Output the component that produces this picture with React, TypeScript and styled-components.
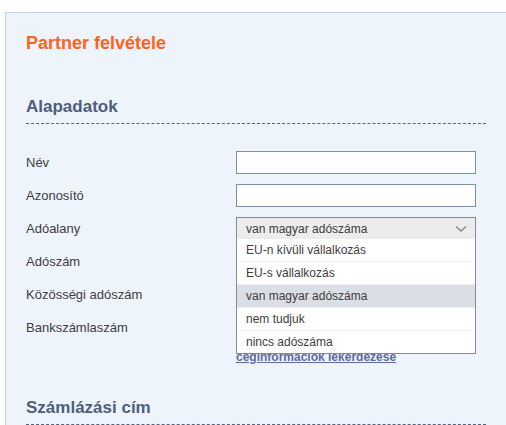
import styled, { createGlobalStyle } from "styled-components";

const GlobalStyle = createGlobalStyle`
    html, body {
        margin: 0;
        padding: 0;
        background: #ffffff;
        overflow: hidden;
    }
    body {
        font-family: "Liberation Sans", Arial, sans-serif;
    }
`;

const Page = styled.div`
    padding: 12px 0 0 5px;
    width: 506px;
    height: 425px;
    box-sizing: border-box;
    overflow: hidden;
`;

const Panel = styled.div`
    width: 540px;
    min-height: 500px;
    box-sizing: border-box;
    background: #edf4fc;
    border: 1px solid #c4d5ea;
    border-right: none;
    padding: 19px 0 0 20px;
`;

const Title = styled.h1`
    margin: 0;
    font-size: 18px;
    line-height: 22px;
    font-weight: bold;
    color: #ff6220;
`;

const Section = styled.section`
    width: 460px;
    margin-top: ${(p: { $top: number }) => p.$top}px;
`;

const SectionTitle = styled.h2`
    margin: 0;
    padding-bottom: 5px;
    font-size: 17px;
    line-height: 22px;
    font-weight: bold;
    color: #4e5e7b;
    border-bottom: 1px dashed #55647e;
`;

const Form = styled.div`
    display: flex;
    flex-direction: column;
    padding-top: 22px;
`;

const Row = styled.div`
    display: grid;
    grid-template-columns: 210px 240px;
    align-items: center;
    height: 33px;
`;

const Label = styled.label`
    font-size: 13px;
    color: #3d3d3d;
`;

const Field = styled.div`
    position: relative;
    height: 23px;
`;

const Input = styled.input`
    width: 240px;
    height: 23px;
    box-sizing: border-box;
    border: 1px solid #7b8fae;
    background: #ffffff;
    margin: 0;
    padding: 0 6px;
    outline: none;
`;

const Select = styled.div`
    display: flex;
    align-items: center;
    justify-content: space-between;
    height: 23px;
    box-sizing: border-box;
    border: 1px solid #8a8a8a;
    background: #ececec;
    padding: 0 8px 0 9px;
    font-size: 12px;
    color: #3d3d3d;
`;

const Menu = styled.ul`
    position: absolute;
    top: 22px;
    left: 0;
    width: 240px;
    box-sizing: border-box;
    margin: 0;
    padding: 0;
    list-style: none;
    background: #ffffff;
    border: 1px solid #8a8a8a;
    border-top: none;
    z-index: 2;
`;

const Option = styled.li<{ $active?: boolean }>`
    height: 23px;
    box-sizing: border-box;
    line-height: 22px;
    padding-left: 9px;
    font-size: 12px;
    color: #3d3d3d;
    background: ${(p) => (p.$active ? "#dadee5" : "#ffffff")};
    border-bottom: 1px solid #f0f0f0;
    &:last-child {
        border-bottom: none;
        height: 22px;
    }
`;

const LinkRow = styled.div`
    padding-left: 210px;
    margin-top: 5px;
    line-height: 14px;
`;

const InfoLink = styled.a`
    font-size: 12px;
    font-weight: bold;
    color: #5b6aa0;
    text-decoration: underline;
`;

const Chevron = () => (
    <svg width="12" height="8" viewBox="0 0 12 8">
        <path d="M1 1.5 L6 6 L11 1.5" fill="none" stroke="#8a8a8a" strokeWidth="1.6" />
    </svg>
);

const options = [
    "EU-n kívüli vállalkozás",
    "EU-s vállalkozás",
    "van magyar adószáma",
    "nem tudjuk",
    "nincs adószáma",
];

function App() {
    return (
        <>
            <GlobalStyle />
            <Page>
                <Panel>
                    <Title>Partner felvétele</Title>
                    <Section $top={42}>
                        <SectionTitle>Alapadatok</SectionTitle>
                        <Form>
                            <Row>
                                <Label>Név</Label>
                                <Field><Input /></Field>
                            </Row>
                            <Row>
                                <Label>Azonosító</Label>
                                <Field><Input /></Field>
                            </Row>
                            <Row>
                                <Label>Adóalany</Label>
                                <Field>
                                    <Select>
                                        van magyar adószáma <Chevron />
                                    </Select>
                                    <Menu>
                                        {options.map((o) => (
                                            <Option key={o} $active={o === "van magyar adószáma"}>{o}</Option>
                                        ))}
                                    </Menu>
                                </Field>
                            </Row>
                            <Row>
                                <Label>Adószám</Label>
                                <Field />
                            </Row>
                            <Row>
                                <Label>Közösségi adószám</Label>
                                <Field />
                            </Row>
                            <Row>
                                <Label>Bankszámlaszám</Label>
                                <Field />
                            </Row>
                            <LinkRow>
                                <InfoLink href="#">céginformációk lekérdezése</InfoLink>
                            </LinkRow>
                        </Form>
                    </Section>
                    <Section $top={33}>
                        <SectionTitle>Számlázási cím</SectionTitle>
                    </Section>
                </Panel>
            </Page>
        </>
    );
}

export default App;
